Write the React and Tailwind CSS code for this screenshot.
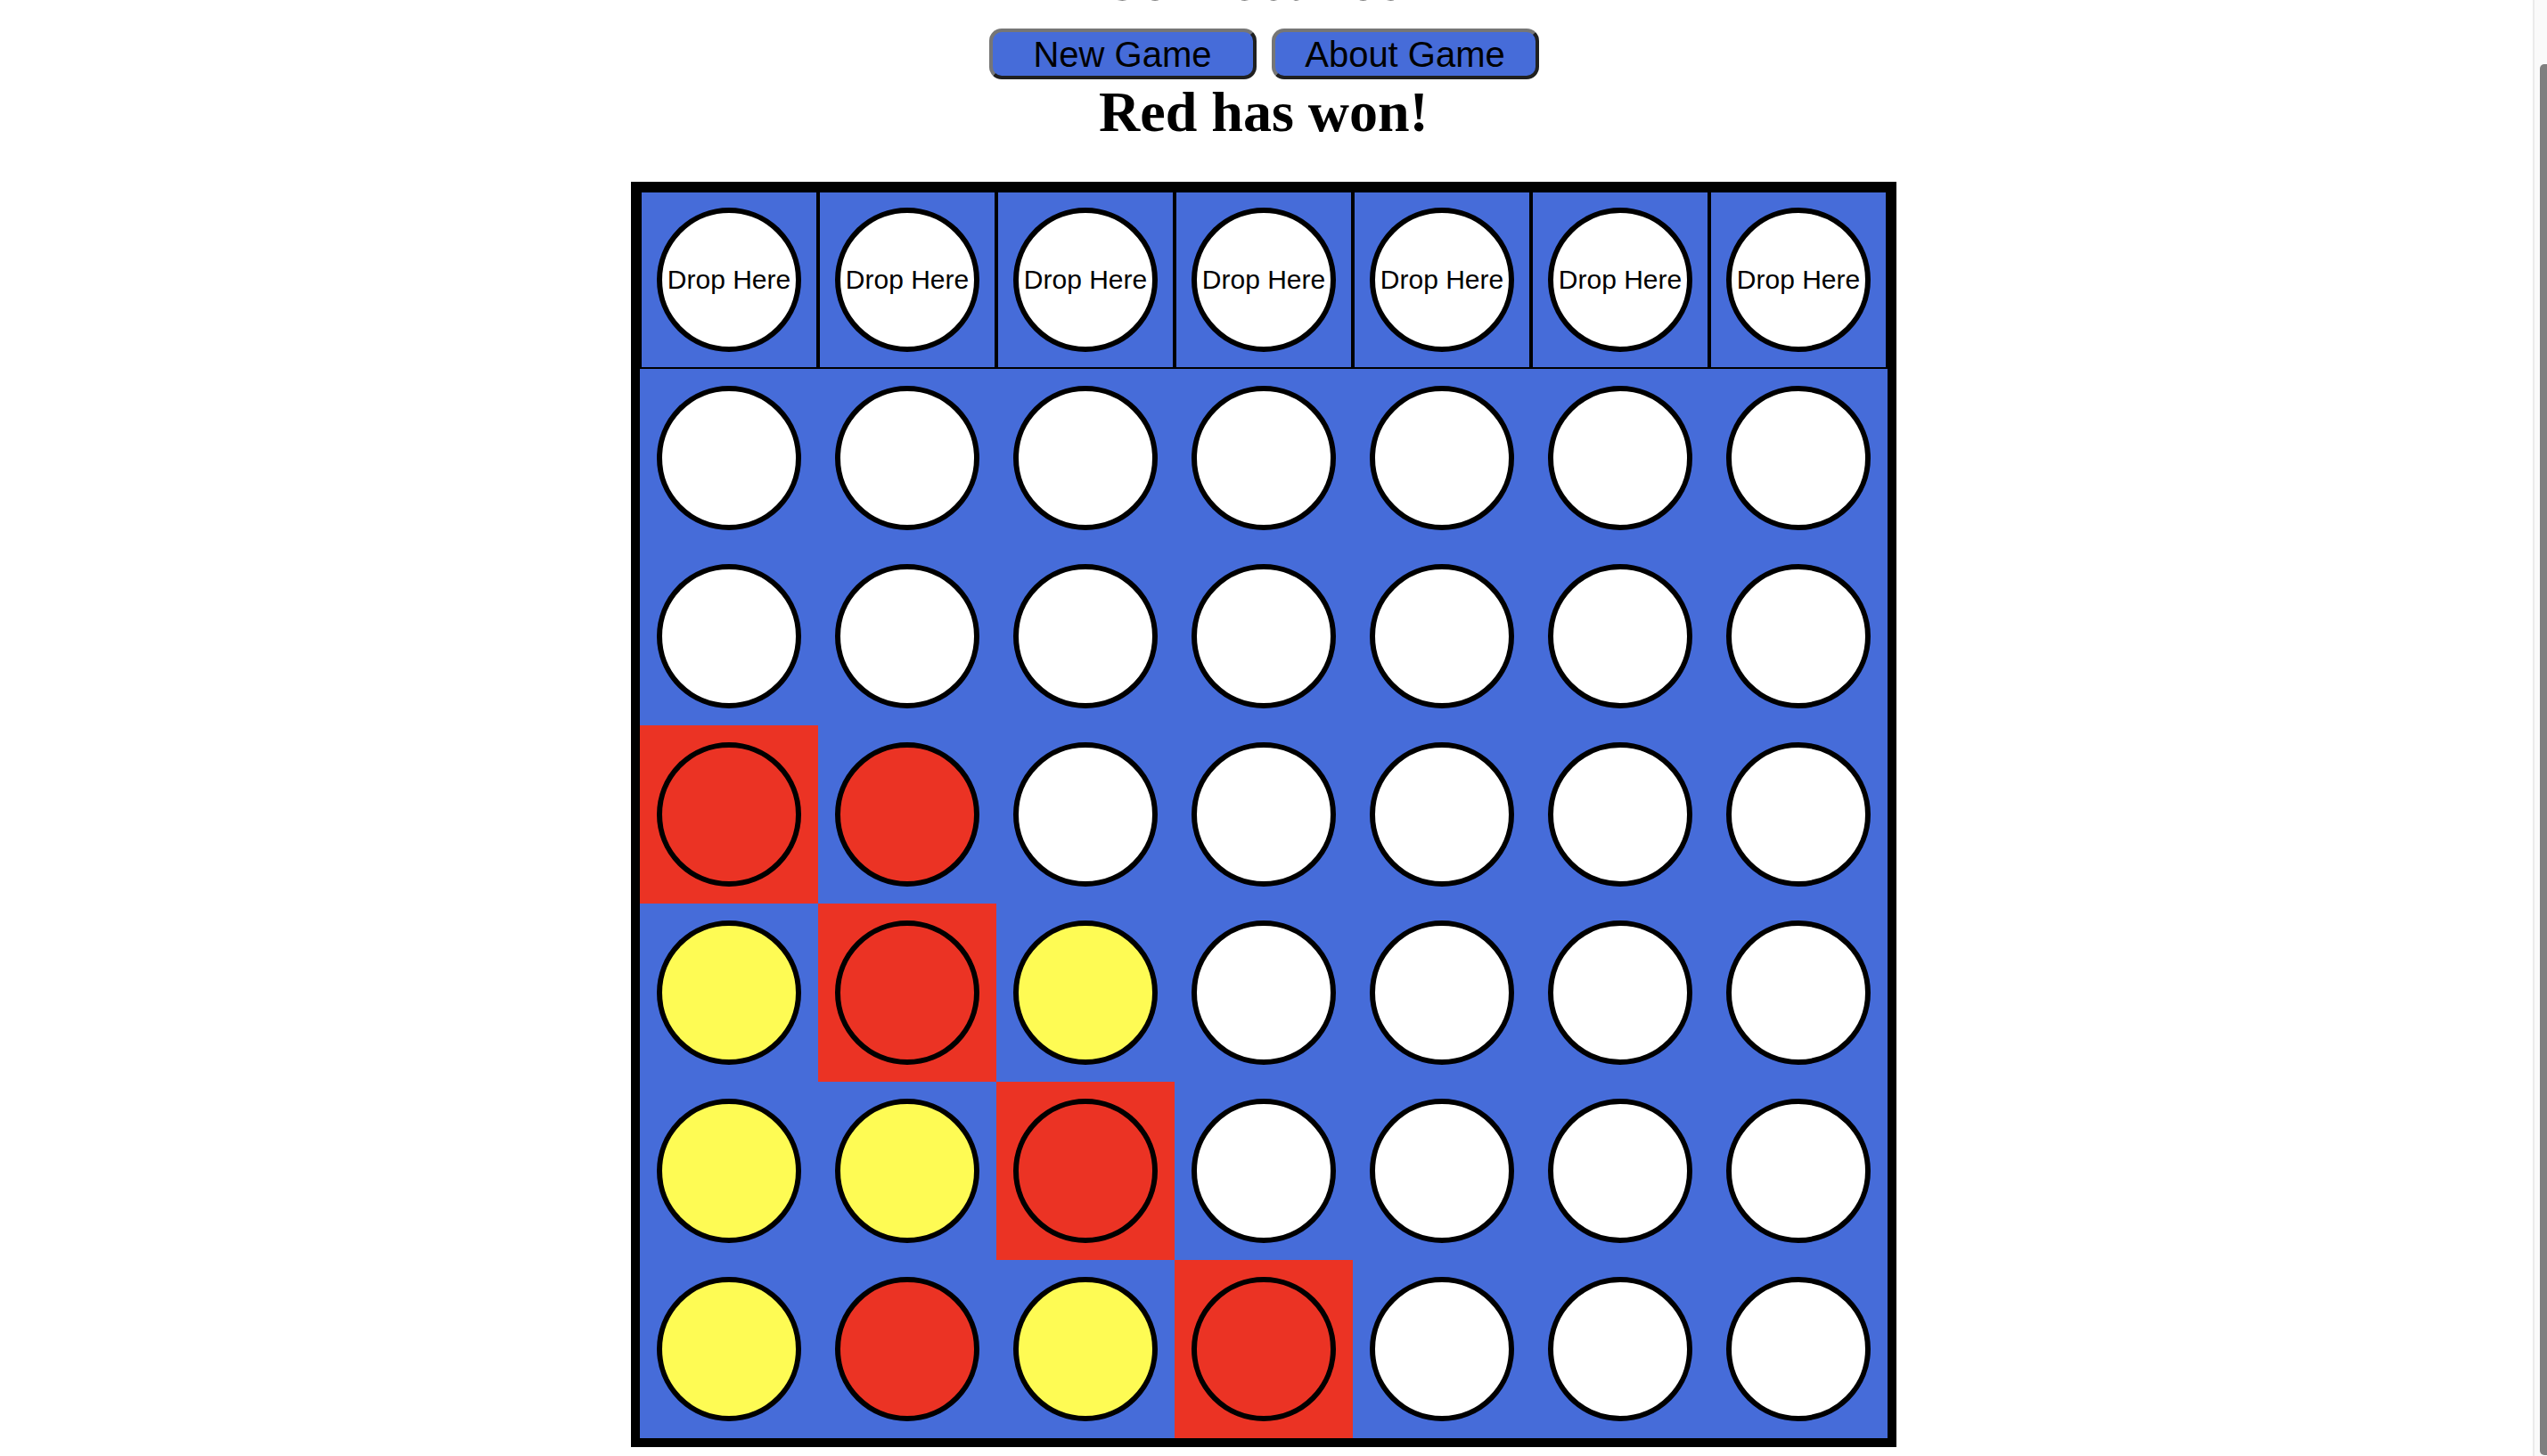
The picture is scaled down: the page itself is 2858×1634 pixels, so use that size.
import React from "react";

const BOARD = [
  ["w", "w", "w", "w", "w", "w", "w"],
  ["w", "w", "w", "w", "w", "w", "w"],
  ["r", "r", "w", "w", "w", "w", "w"],
  ["y", "r", "y", "w", "w", "w", "w"],
  ["y", "y", "r", "w", "w", "w", "w"],
  ["y", "r", "y", "r", "w", "w", "w"],
];

const WIN = { "2-0": true, "3-1": true, "4-2": true, "5-3": true };

function Disc({ color, children }) {
  const bg =
    color === "r" ? "bg-[#eb3324]" : color === "y" ? "bg-[#fefb54]" : "bg-white";
  return (
    <div
      className={`w-[162px] h-[162px] rounded-full border-[6px] border-black ${bg} flex items-center justify-center`}
    >
      {children}
    </div>
  );
}

export default function App() {
  return (
    <div className="h-screen w-full overflow-hidden flex bg-white">
      <div className="flex-1 flex flex-col items-center pr-[22px]">
        <h1
          className="-mt-[50px] text-[60px] leading-[60px] font-normal text-black"
          style={{ fontFamily: '"Liberation Sans", Arial, sans-serif' }}
        >
          Connect Four
        </h1>
        <div className="mt-[22px] flex gap-[17px]">
          {["New Game", "About Game"].map((t) => (
            <button
              key={t}
              className="w-[300px] h-[57px] rounded-[14px] border-[4px] border-t-[#767676] border-l-[#767676] border-b-[#202020] border-r-[#202020] bg-[#466cd9] text-black text-[40px] leading-none flex items-center justify-center"
              style={{ fontFamily: '"Liberation Sans", Arial, sans-serif' }}
            >
              {t}
            </button>
          ))}
        </div>
        <h2
          className="text-[64px] leading-[74px] font-bold text-black"
          style={{ fontFamily: '"Liberation Serif", "Times New Roman", serif' }}
        >
          Red has won!
        </h2>
        <div className="mt-[41px] w-[1420px] border-[10px] border-black bg-[#466cd9]">
          <div className="grid grid-cols-7">
            {Array.from({ length: 7 }).map((_, i) => (
              <div
                key={i}
                className="h-[200px] border-2 border-black bg-[#466cd9] flex items-center justify-center"
              >
                <Disc color="w">
                  <span
                    className="text-[30px] leading-none text-black whitespace-nowrap"
                    style={{ fontFamily: '"Liberation Sans", Arial, sans-serif' }}
                  >
                    Drop Here
                  </span>
                </Disc>
              </div>
            ))}
          </div>
          {BOARD.map((row, r) => (
            <div key={r} className="grid grid-cols-7">
              {row.map((c, ci) => (
                <div
                  key={ci}
                  className={`h-[200px] flex items-center justify-center ${
                    WIN[`${r}-${ci}`] ? "bg-[#eb3324]" : "bg-[#466cd9]"
                  }`}
                >
                  <Disc color={c} />
                </div>
              ))}
            </div>
          ))}
        </div>
      </div>
      <div className="fixed right-0 top-0 h-full w-[16px] bg-[#fafafa] border-l-2 border-[#ebebeb]">
        <div className="absolute right-0 top-[72px] bottom-[1px] w-[8px] rounded-l-[5px] bg-[#7f7f7f]" />
      </div>
    </div>
  );
}
